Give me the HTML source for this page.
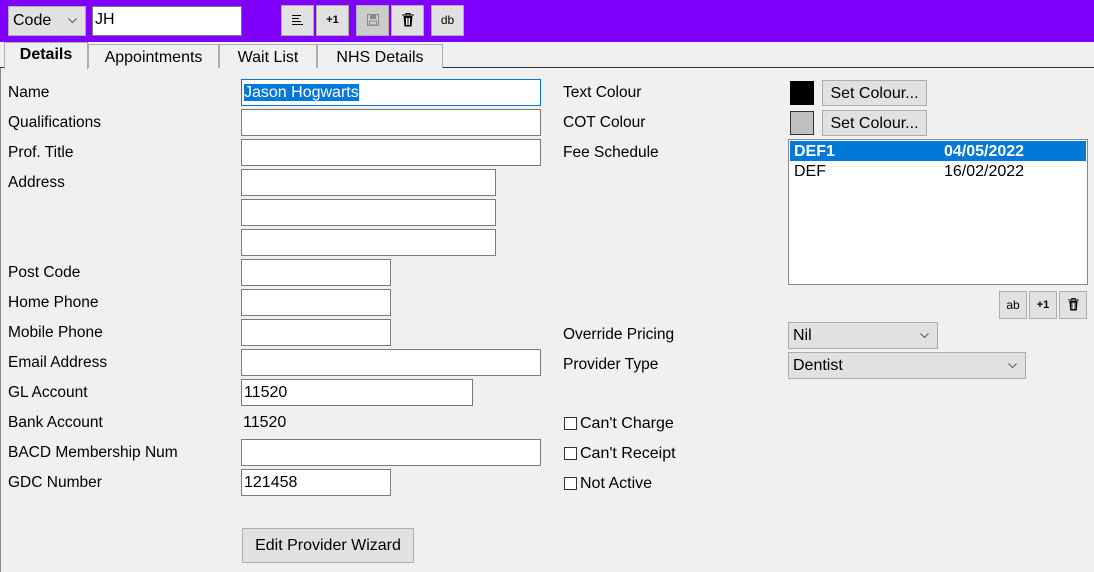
<!DOCTYPE html><html><head><style>
body{margin:0;width:1094px;height:572px;background:#f0f0f0;font-family:"Liberation Sans",sans-serif;font-size:15px;color:#000;position:relative;overflow:hidden}
.a{position:absolute}
.top{left:0;top:0;width:1094px;height:42px;background:#8000ff}
.in{position:absolute;background:#fff;border:1px solid #7a7a7a;box-sizing:border-box;height:27px;padding:0 2px;line-height:25px;font-size:16px}
.lb{position:absolute;left:8px;font-size:15.5px}
.btn{position:absolute;background:#e1e1e1;border:1px solid #adadad;box-sizing:border-box;text-align:center;font-size:15px}
.tb{position:absolute;background:#e1e1e1;border:1px solid #adadad;box-sizing:border-box;top:5px;width:33px;height:31px;font-size:11px;font-weight:bold;text-align:center;line-height:29px}
.tab{position:absolute;top:44px;height:24px;background:#f0f0f0;border:1px solid #adadad;border-bottom:none;box-sizing:border-box;text-align:center;line-height:25px;font-size:16px}
.cb{position:absolute;width:11px;height:11px;border:1px solid #333;background:#fff}
.dd svg{position:absolute;right:8px;top:50%;margin-top:-3px}
</style></head><body>
<div class="a top"></div>
<div class="btn dd" style="left:8px;top:6px;width:78px;height:30px;text-align:left;padding:0 4px;line-height:28px;font-size:16px">Code<svg width="9" height="5" viewBox="0 0 9 5"><path d="M0.5 0.5L4.5 4.5L8.5 0.5" fill="none" stroke="#555"/></svg></div>
<div class="in" style="left:92px;top:6px;width:150px;height:30px;font-size:16px;line-height:26px">JH</div>
<div class="tb" style="left:281px"><svg width="11" height="10" viewBox="0 0 11 10" style="vertical-align:middle"><path d="M0 0.5H9M0 3.5H7M0 6.5H9M0 9.5H11" stroke="#000"/></svg></div>
<div class="tb" style="left:316px">+1</div>
<div class="tb" style="left:356px;background:#ccc"><svg width="12" height="12" viewBox="0 0 12 12" style="vertical-align:middle"><rect x="0.5" y="0.5" width="11" height="11" fill="none" stroke="#888"/><rect x="3" y="1" width="6" height="4" fill="#888"/><rect x="2.5" y="7" width="7" height="4" fill="none" stroke="#888"/></svg></div>
<div class="tb" style="left:391px"><svg width="12" height="14" viewBox="0 0 12 14" style="vertical-align:middle"><path d="M0 2H12M4 2V0.5H8V2" stroke="#000" fill="none"/><path d="M1.5 3H10.5L9.5 13.5H2.5Z" fill="#000"/><path d="M4.5 5V12M6 5V12M7.5 5V12" stroke="#fff"/></svg></div>
<div class="tb" style="left:431px;font-weight:normal;font-size:12px">db</div>
<div class="a" style="left:0;top:67px;width:1094px;height:1px;background:#333"></div>
<div class="tab" style="left:4px;top:42px;width:84px;height:27px;font-weight:bold;font-size:16px;line-height:24px">Details</div>
<div class="tab" style="left:88px;width:131px">Appointments</div>
<div class="tab" style="left:219px;width:98px">Wait List</div>
<div class="tab" style="left:317px;width:126px">NHS Details</div>
<div class="a" style="left:0;top:68px;width:1px;height:504px;background:#888"></div>

<div class="lb" style="top:84px">Name</div>
<div class="lb" style="top:114px">Qualifications</div>
<div class="lb" style="top:144px">Prof. Title</div>
<div class="lb" style="top:174px">Address</div>
<div class="lb" style="top:264px">Post Code</div>
<div class="lb" style="top:294px">Home Phone</div>
<div class="lb" style="top:324px">Mobile Phone</div>
<div class="lb" style="top:354px">Email Address</div>
<div class="lb" style="top:384px">GL Account</div>
<div class="lb" style="top:414px">Bank Account</div>
<div class="lb" style="top:444px">BACD Membership Num</div>
<div class="lb" style="top:474px">GDC Number</div>

<div class="in" style="left:241px;top:79px;width:300px;border-color:#0078d7"><span style="background:#0078d7;color:#fff">Jason Hogwarts</span></div>
<div class="in" style="left:241px;top:109px;width:300px"></div>
<div class="in" style="left:241px;top:139px;width:300px"></div>
<div class="in" style="left:241px;top:169px;width:255px"></div>
<div class="in" style="left:241px;top:199px;width:255px"></div>
<div class="in" style="left:241px;top:229px;width:255px"></div>
<div class="in" style="left:241px;top:259px;width:150px"></div>
<div class="in" style="left:241px;top:289px;width:150px"></div>
<div class="in" style="left:241px;top:319px;width:150px"></div>
<div class="in" style="left:241px;top:349px;width:300px"></div>
<div class="in" style="left:241px;top:379px;width:232px">11520</div>
<div class="a" style="left:243px;top:414px;font-size:16px">11520</div>
<div class="in" style="left:241px;top:439px;width:300px"></div>
<div class="in" style="left:241px;top:469px;width:150px">121458</div>
<div class="btn" style="left:242px;top:528px;width:172px;height:35px;line-height:33px;font-size:16px">Edit Provider Wizard</div>

<div class="a" style="left:563px;top:84px;font-size:15.5px">Text Colour</div>
<div class="a" style="left:563px;top:114px;font-size:15.5px">COT Colour</div>
<div class="a" style="left:563px;top:144px;font-size:15.5px">Fee Schedule</div>
<div class="a" style="left:563px;top:326px;font-size:15.5px">Override Pricing</div>
<div class="a" style="left:563px;top:356px;font-size:15.5px">Provider Type</div>
<div class="cb" style="left:564px;top:417px"></div><div class="a" style="left:580px;top:415px;font-size:16px">Can't Charge</div>
<div class="cb" style="left:564px;top:447px"></div><div class="a" style="left:580px;top:445px;font-size:16px">Can't Receipt</div>
<div class="cb" style="left:564px;top:477px"></div><div class="a" style="left:580px;top:475px;font-size:16px">Not Active</div>

<div class="a" style="left:790px;top:81px;width:24px;height:24px;background:#000"></div>
<div class="a" style="left:790px;top:111px;width:22px;height:22px;background:#c0c0c0;border:1px solid #333"></div>
<div class="btn" style="left:822px;top:80px;width:105px;height:26px;line-height:25px;font-size:16px">Set Colour...</div>
<div class="btn" style="left:822px;top:110px;width:105px;height:26px;line-height:25px;font-size:16px">Set Colour...</div>
<div class="a" style="left:788px;top:139px;width:300px;height:146px;background:#fff;border:1px solid #888;box-sizing:border-box">
<div style="position:absolute;left:1px;top:1px;width:296px;height:20px;background:#0078d7;color:#fff;font-weight:bold;font-size:16px"><span style="position:absolute;left:4px;top:2px">DEF1</span><span style="position:absolute;left:154px;top:2px">04/05/2022</span></div>
<div style="position:absolute;left:5px;top:23px;font-size:16px">DEF</div><div style="position:absolute;left:155px;top:23px;font-size:16px">16/02/2022</div>
</div>
<div class="btn" style="left:999px;top:291px;width:28px;height:28px;line-height:26px;font-size:12px">ab</div>
<div class="btn" style="left:1029px;top:291px;width:28px;height:28px;line-height:26px;font-size:11px;font-weight:bold">+1</div>
<div class="btn" style="left:1059px;top:291px;width:28px;height:28px;padding-top:6px"><svg width="11" height="13" viewBox="0 0 12 14"><path d="M0 2H12M4 2V0.5H8V2" stroke="#000" fill="none"/><path d="M1.5 3H10.5L9.5 13.5H2.5Z" fill="#000"/><path d="M4.5 5V12M6 5V12M7.5 5V12" stroke="#fff"/></svg></div>
<div class="btn dd" style="left:788px;top:322px;width:150px;height:27px;text-align:left;padding:0 4px;line-height:26px;font-size:16px">Nil<svg width="9" height="5" viewBox="0 0 9 5"><path d="M0.5 0.5L4.5 4.5L8.5 0.5" fill="none" stroke="#555"/></svg></div>
<div class="btn dd" style="left:788px;top:352px;width:238px;height:27px;text-align:left;padding:0 4px;line-height:26px;font-size:16px">Dentist<svg width="9" height="5" viewBox="0 0 9 5"><path d="M0.5 0.5L4.5 4.5L8.5 0.5" fill="none" stroke="#555"/></svg></div>
</body></html>
